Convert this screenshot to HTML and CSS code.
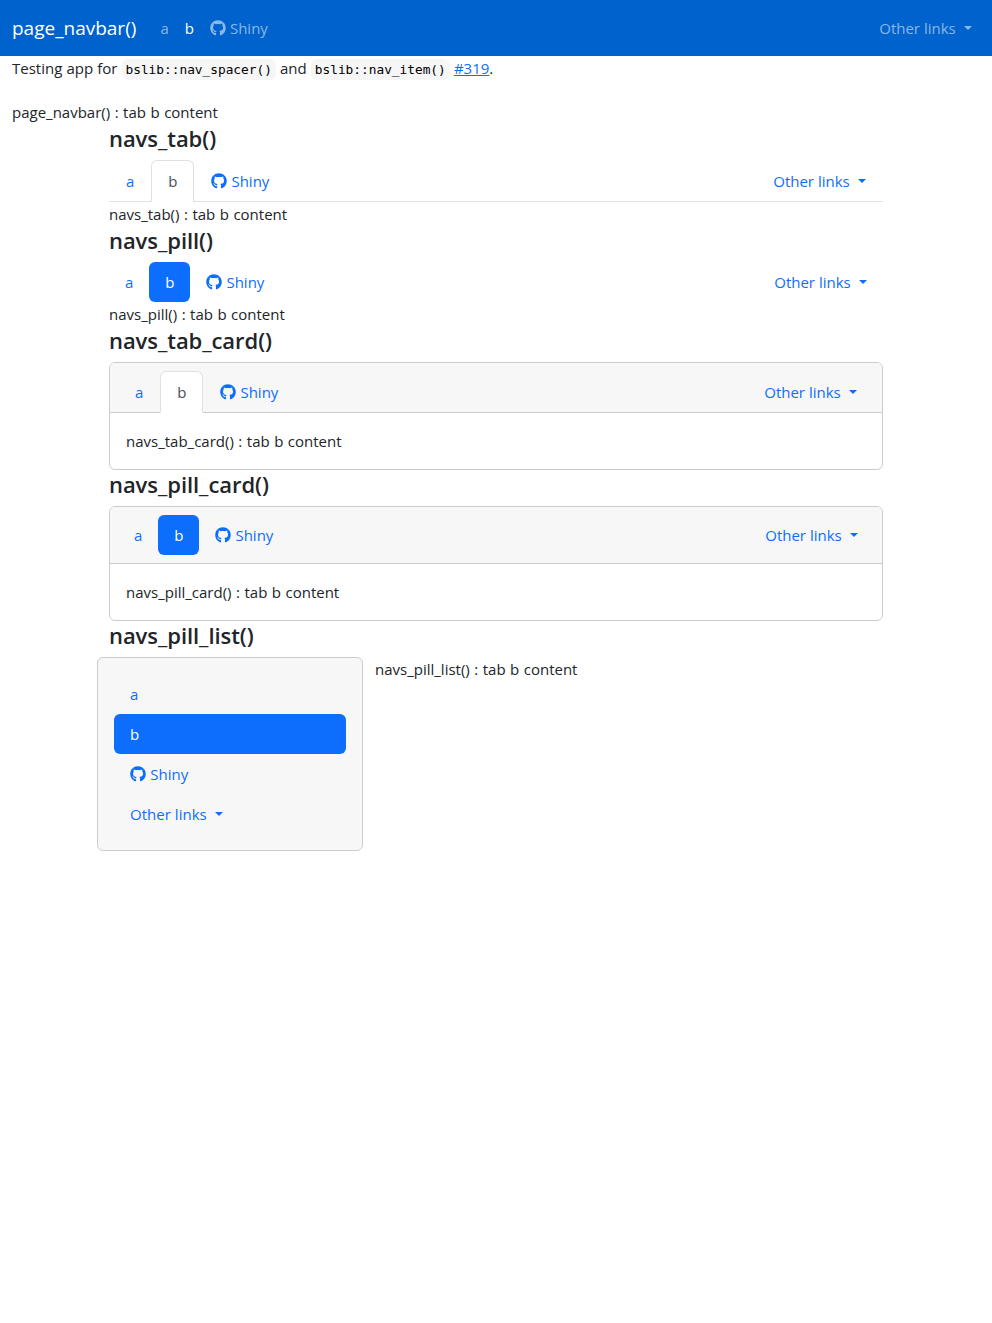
FILE: index.html
```html
<!DOCTYPE html>
<html lang="en">
<head>
<meta charset="utf-8">
<title>page_navbar()</title>
<link rel="stylesheet" href="styles.css">
</head>
<body>
<svg class="defs" aria-hidden="true"><symbol id="github" viewBox="0 0 496 512"><path d="M165.9 397.4c0 2-2.3 3.600-5.200 3.600-3.300.3-5.600-1.300-5.600-3.600 0-2 2.300-3.600 5.200-3.600 3-.3 5.600 1.300 5.600 3.600zM244.800 8C106.100 8 0 113.300 0 252c0 110.900 69.800 205.800 169.500 239.200 12.800 2.300 17.300-5.600 17.300-12.100 0-6.200-.3-40.400-.3-61.400 0 0-70 15-84.700-29.800 0 0-11.400-29.100-27.800-36.600 0 0-22.900-15.700 1.600-15.400 0 0 24.900 2 38.600 25.800 21.900 38.600 58.600 27.500 72.900 20.900 2.300-16 8.800-27.100 16-33.700-55.900-6.200-112.300-14.300-112.300-110.500 0-27.500 7.600-41.300 23.600-58.900-2.600-6.500-11.100-33.300 2.600-67.900 20.900-6.500 69 27 69 27 20-5.600 41.500-8.500 62.800-8.500s42.800 2.900 62.800 8.500c0 0 48.100-33.600 69-27 13.700 34.700 5.200 61.400 2.600 67.900 16 17.700 25.800 31.500 25.800 58.900 0 96.500-58.900 104.200-114.800 110.500 9.200 7.900 17 22.900 17 46.400 0 33.700-.3 75.400-.3 83.600 0 6.500 4.600 14.400 17.300 12.100C428.200 457.800 496 362.900 496 252 496 113.300 383.500 8 244.800 8z"/></symbol></svg>

<header class="navbar">
  <a class="brand">page_navbar()</a>
  <nav class="nav nav-bar">
    <a class="link"><span class="glyph-a">a</span></a>
    <a class="link active"><span class="glyph-b">b</span></a>
    <a class="link"><svg class="icon"><use href="#github"/></svg>Shiny</a>
    <a class="link end">Other links<i class="caret"></i></a>
  </nav>
</header>

<div class="page">
  <p class="intro">Testing app for <code>bslib::nav_spacer()</code> and <code>bslib::nav_item()</code> <a class="issue">#319</a>.</p>
  <div class="content">page_navbar() : tab b content</div>
</div>

<main class="container">
  <h4>navs_tab()</h4>
  <nav class="nav tabs">
    <a class="link"><span class="glyph-a">a</span></a>
    <a class="link active"><span class="glyph-b">b</span></a>
    <a class="link"><svg class="icon"><use href="#github"/></svg>Shiny</a>
    <a class="link end">Other links<i class="caret"></i></a>
  </nav>
  <div class="content">navs_tab() : tab b content</div>

  <h4>navs_pill()</h4>
  <nav class="nav pills">
    <a class="link"><span class="glyph-a">a</span></a>
    <a class="link active"><span class="glyph-b">b</span></a>
    <a class="link"><svg class="icon"><use href="#github"/></svg>Shiny</a>
    <a class="link end">Other links<i class="caret"></i></a>
  </nav>
  <div class="content">navs_pill() : tab b content</div>

  <h4>navs_tab_card()</h4>
  <section class="card">
    <div class="card-header">
      <nav class="nav tabs card-tabs">
        <a class="link"><span class="glyph-a">a</span></a>
        <a class="link active"><span class="glyph-b">b</span></a>
        <a class="link"><svg class="icon"><use href="#github"/></svg>Shiny</a>
        <a class="link end">Other links<i class="caret"></i></a>
      </nav>
    </div>
    <div class="card-body content">navs_tab_card() : tab b content</div>
  </section>

  <h4>navs_pill_card()</h4>
  <section class="card">
    <div class="card-header">
      <nav class="nav pills">
        <a class="link"><span class="glyph-a">a</span></a>
        <a class="link active"><span class="glyph-b">b</span></a>
        <a class="link"><svg class="icon"><use href="#github"/></svg>Shiny</a>
        <a class="link end">Other links<i class="caret"></i></a>
      </nav>
    </div>
    <div class="card-body content">navs_pill_card() : tab b content</div>
  </section>

  <h4>navs_pill_list()</h4>
  <div class="row">
    <nav class="nav pills well">
      <a class="link">a</a>
      <a class="link active">b</a>
      <a class="link"><svg class="icon"><use href="#github"/></svg>Shiny</a>
      <a class="link">Other links<i class="caret"></i></a>
    </nav>
    <div class="content">navs_pill_list() : tab b content</div>
  </div>
</main>
</body>
</html>
```
FILE: styles.css
```css
* { box-sizing: border-box; }
body {
  margin: 0;
  background: #fff;
  color: #212529;
  font-family: "Open Sans", "Noto Sans", sans-serif;
  font-size: 15px;
  line-height: 24px;
  letter-spacing: 0;
  word-spacing: 0.200px;
  white-space: nowrap;
}
.defs { display: none; }
.navbar {
  display: flex;
  align-items: center;
  height: 56px;
  padding: 0 12px;
  background: #0062cc;
}
.brand {
  width: 124.500px;
  margin-right: 16px;
  color: #fff;
  font-size: 19px;
  line-height: 30px;
}
.nav { display: flex; }
.link {
  display: flex;
  align-items: center;
  padding: 8px 16px;
  color: #0d6efd;
}
.glyph-a { width: 8.140px; }
.glyph-b { width: 9px; }
.end { margin-left: auto; word-spacing: 0; }
.icon {
  width: 16px;
  height: 16px;
  margin-right: 4.300px;
  fill: currentColor;
}
.caret {
  margin-left: 8.300px;
  border-top: 4.800px solid;
  border-left: 4.800px solid transparent;
  border-right: 4.800px solid transparent;
}
.nav-bar { flex: 1; }
.nav-bar .link { padding: 8px; color: rgba(255, 255, 255, 0.55); }
.nav-bar .active { color: #fff; }

.page { padding: 0 12px; }
.intro { margin: 0 0 20px; height: 24px; }
.content { word-spacing: 0.600px; }
code {
  padding: 3px 4px;
  border-radius: 6px;
  background: #f6f6f6;
  color: #000;
  font-family: "DejaVu Sans Mono", monospace;
  font-size: 12.800px;
}
.issue { color: #0d6efd; text-decoration: underline; }

.container { width: 774px; margin: 0 auto; }
h4 {
  margin: 0 0 8px;
  font-size: 22px;
  font-weight: 600;
  letter-spacing: -0.060px;
  line-height: 28px;
}
.tabs { height: 42px; border-bottom: 1px solid #dee2e6; }
.tabs .link {
  height: 42px;
  border: 1px solid transparent;
  border-radius: 6px 6px 0 0;
}
.tabs .active {
  border-color: #dee2e6 #dee2e6 #fff;
  background: #fff;
  color: #495057;
}
.pills .link { height: 40px; border-radius: 6px; }
.pills .active { background: #0d6efd; color: #fff; }

.card { border: 1px solid #ccc; border-radius: 6px; }
.card-header {
  padding: 8px;
  border-bottom: 1px solid #ccc;
  border-radius: 5px 5px 0 0;
  background: #f7f7f7;
}
.card-tabs { margin-bottom: -9px; border-bottom: 0; }
.card-body { padding: 16px; }

.row { display: flex; align-items: flex-start; gap: 12px; margin-left: -12px; }
.well {
  flex-direction: column;
  width: 266px;
  padding: 16px;
  border: 1px solid #ccc;
  border-radius: 6px;
  background: #f7f7f7;
}
```
